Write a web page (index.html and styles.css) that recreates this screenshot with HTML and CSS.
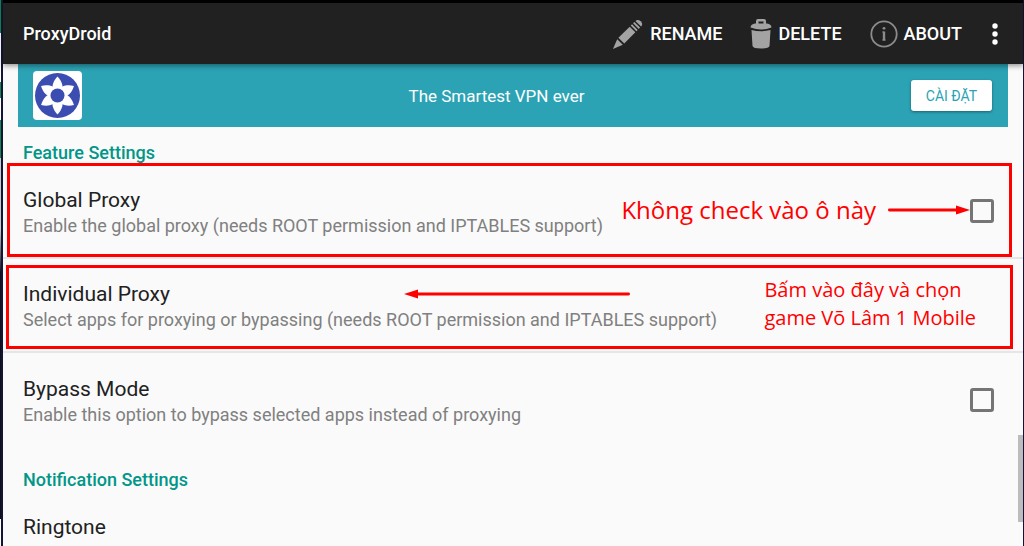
FILE: index.html
```
<!DOCTYPE html>
<html lang="vi">

<head>
    <meta charset="UTF-8">
    <meta name="viewport" content="width=device-width, initial-scale=1.0">
    <title>ProxyDroid</title>
    <link rel="stylesheet" href="styles.css">
</head>

<body>
    <div class="window">
        <header class="app-bar">
            <h1>ProxyDroid</h1>
            <button type="button" class="action">
                <svg width="32" height="34" viewBox="0 0 34 34" fill="#a3a3a3">
                    <path d="M1 33 L5.500 22.500 L11.500 28.500 Z" />
                    <path d="M6.800 21 L18.800 9.200 L24.800 15.200 L13 27.200 Z" />
                    <path d="M19.900 8.100 L21.300 6.700 L27.300 12.700 L25.900 14.100 Z" />
                    <path d="M22.400 5.600 L23.800 4.200 L29.800 10.200 L28.400 11.600 Z" />
                    <path d="M24.900 3.100 Q27.5 0.8 30.5 3.500 Q33.500 6.500 30.900 9.100 Z" />
                </svg>
                RENAME
            </button>
            <button type="button" class="action">
                <svg width="22" height="30" viewBox="0 0 22 30" fill="#a3a3a3">
                    <path d="M6 5 V2 Q6 0 8 0 H14 Q16 0 16 2 V5 H13.5 V2.5 H8.5 V5 Z" />
                    <path d="M0.5 8.5 Q1 5 5 4.6 H17 Q21 5 21.5 8.5 Q16 10.5 11 10.5 Q6 10.5 0.5 8.5 Z" />
                    <path d="M1.5 11 Q11 13.5 20.5 11 L19.5 27 Q19 29.5 11 29.5 Q3 29.5 2.5 27 Z" />
                </svg>
                DELETE
            </button>
            <button type="button" class="action">
                <svg width="28" height="28" viewBox="0 0 28 28" fill="none" stroke="#8c8c8c">
                    <circle cx="14" cy="14" r="12.7" stroke-width="1.8" />
                    <path d="M14 11.500 V20.500" stroke-width="2.4" />
                    <path d="M12.3 12 H14 M12.3 20 H15.700" stroke-width="1" />
                    <circle cx="14" cy="8.3" r="1.4" fill="#8c8c8c" stroke="none" />
                </svg>
                ABOUT
            </button>
            <button type="button" class="more" aria-label="More options">
                <svg width="6" height="22" viewBox="0 0 6 22" fill="#fff">
                    <circle cx="3" cy="3" r="2.7" />
                    <circle cx="3" cy="11" r="2.7" />
                    <circle cx="3" cy="19" r="2.7" />
                </svg>
            </button>
        </header>

        <main class="settings">
            <div class="banner">
                <svg class="banner-logo" width="49" height="49" viewBox="0 0 49 49">
                    <rect width="49" height="49" rx="4" fill="#fff" />
                    <circle cx="24.5" cy="24.5" r="22.5" fill="#3c4db1" />
                    <g fill="#fff">
                        <path id="petal" d="M24.5 5.5 C19.5 11 18 16 20.5 24.5 H28.5 C31 16 29.5 11 24.5 5.5 Z" />
                        <use href="#petal" transform="rotate(60 24.5 24.5)" />
                        <use href="#petal" transform="rotate(120 24.5 24.5)" />
                        <use href="#petal" transform="rotate(180 24.5 24.5)" />
                        <use href="#petal" transform="rotate(240 24.5 24.5)" />
                        <use href="#petal" transform="rotate(300 24.5 24.5)" />
                    </g>
                    <circle cx="24.5" cy="24.5" r="7" fill="#3c4db1" />
                </svg>
                <p>The Smartest VPN ever</p>
                <button type="button" class="install">CÀI ĐẶT</button>
            </div>

            <h2>Feature Settings</h2>
            <div class="row">
                <label class="row-text" for="globalProxy">
                    <span class="row-title">Global Proxy</span>
                    <span class="row-summary">Enable the global proxy (needs ROOT permission and IPTABLES support)</span>
                </label>
                <input type="checkbox" id="globalProxy">
                <div class="frame frame-global">
                    <span class="note note-large">Không check vào ô này</span>
                    <svg width="82" height="10" viewBox="0 0 82 10" fill="#f00">
                        <rect y="3.6" width="70" height="2.8" rx="1.4" />
                        <path d="M68 0.5 L82 5 L68 9.5 Z" />
                    </svg>
                </div>
            </div>
            <div class="row">
                <div class="row-text">
                    <span class="row-title">Individual Proxy</span>
                    <span class="row-summary">Select apps for proxying or bypassing (needs ROOT permission and IPTABLES support)</span>
                </div>
                <div class="frame frame-individual">
                    <svg width="226" height="10" viewBox="0 0 226 10" fill="#f00">
                        <rect x="12" y="3.6" width="214" height="2.8" rx="1.4" />
                        <path d="M14 0.5 L0 5 L14 9.5 Z" />
                    </svg>
                    <span class="note">Bấm vào đây và chọn<br>game Võ Lâm 1 Mobile</span>
                </div>
            </div>
            <div class="row">
                <label class="row-text" for="bypassMode">
                    <span class="row-title">Bypass Mode</span>
                    <span class="row-summary">Enable this option to bypass selected apps instead of proxying</span>
                </label>
                <input type="checkbox" id="bypassMode">
            </div>

            <h2>Notification Settings</h2>
            <div class="row row-ringtone">
                <div class="row-text">
                    <span class="row-title">Ringtone</span>
                </div>
            </div>
            <div class="scrollbar"></div>
        </main>
    </div>
</body>

</html>
```
FILE: styles.css
```
* {
    margin: 0;
    padding: 0;
    box-sizing: border-box;
}

body {
    height: 100vh;
    padding-left: 1px;
    overflow: hidden;
    font-family: Roboto, sans-serif;
    /* sliver of the desktop behind the window */
    background: linear-gradient(#0b8a4b 0 6%, #fff 6% 15%, #0b8a4b 15% 18%, #fff 18% 22%, #0b8a4b 22% 29%, #ccc 29% 42%, #111 50% 95%, #fff 95%);
}

button {
    border: none;
    background: none;
    font-family: inherit;
    cursor: pointer;
}

.window {
    display: flex;
    flex-direction: column;
    height: 100%;
    border: solid #14143a;
    border-width: 0 1px 0 2px;
    background-color: #fafafa;
}

.app-bar {
    display: flex;
    align-items: center;
    height: 64px;
    flex-shrink: 0;
    padding: 0 23px 0 20px;
    border-top: 3px solid #000;
    background-color: #212121;
    color: #fff;
    box-shadow: 0 2px 5px rgba(0, 0, 0, 0.4);
    position: relative;
    z-index: 1;
}

.app-bar h1 {
    flex: 1;
    font-size: 18px;
    font-weight: 500;
}

.action {
    display: flex;
    align-items: center;
    gap: 6px;
    margin-right: 28px;
    color: #fff;
    font-size: 18px;
    font-weight: 500;
}

.more {
    display: flex;
    padding: 0 2px;
}

.settings {
    position: relative;
    flex: 1;
    overflow: hidden;
}

.banner {
    display: flex;
    align-items: center;
    height: 63px;
    margin: 0 15px;
    padding: 0 16px 0 15px;
    background-color: #2ba3b5;
    color: #fff;
}

.banner p {
    flex: 1;
    text-align: center;
    font-size: 17px;
}

.install {
    height: 31px;
    width: 81px;
    border-radius: 3px;
    background-color: #fff;
    color: #2ba3b5;
    font-size: 14px;
    box-shadow: 0 1px 3px rgba(0, 0, 0, 0.4);
}

.settings h2 {
    padding: 14px 20px 0;
    color: #009688;
    font-size: 18px;
    font-weight: 500;
    line-height: 24px;
}

.settings .row + h2 {
    padding-top: 21px;
}

.row {
    position: relative;
    display: flex;
    align-items: center;
    height: 94px;
    padding: 0 29px 0 20px;
    border-bottom: 2px solid #e6e6e6;
}

.row:has(+ h2) {
    border-bottom: none;
}

.row-text {
    flex: 1;
    padding-top: 4px;
}

.row-ringtone {
    align-items: flex-start;
    padding-top: 18px;
}

.row-title,
.row-summary {
    display: block;
    line-height: 26px;
}

.row-title {
    color: #212121;
    font-size: 21px;
}

.row-summary {
    color: #808080;
    font-size: 18px;
}

input[type="checkbox"] {
    appearance: none;
    width: 24px;
    height: 24px;
    border: 3px solid #757575;
    border-radius: 3px;
}

/* red callouts drawn over the rows */
.frame {
    position: absolute;
    display: flex;
    align-items: center;
    border: 3px solid #f00;
    pointer-events: none;
}

.frame-global {
    inset: -2px 11px 0 4px;
    justify-content: flex-end;
    gap: 12px;
    padding-right: 39px;
}

.frame-individual {
    inset: 6px 10px 2px 3px;
    justify-content: flex-end;
    gap: 134px;
    padding: 0 34px 6px 0;
}

.frame-individual svg {
    margin-bottom: 20px;
}

.note {
    color: #f00;
    font-family: "Open Sans", sans-serif;
    font-size: 20px;
    line-height: 28px;
}

.note-large {
    font-size: 24px;
}

.scrollbar {
    position: absolute;
    top: 77%;
    right: 0;
    width: 5px;
    height: 18%;
    background-color: #bdbdbd;
}
```
